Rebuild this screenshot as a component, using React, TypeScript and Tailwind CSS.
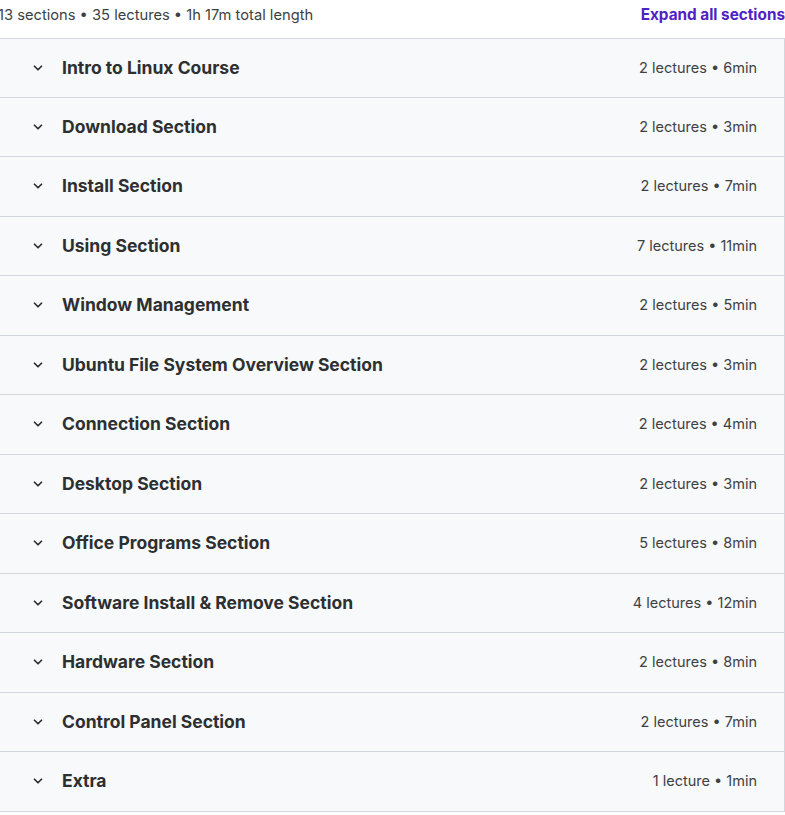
import { ChevronDown } from "lucide-react";

const sections = [
  { title: "Intro to Linux Course", meta: "2 lectures • 6min" },
  { title: "Download Section", meta: "2 lectures • 3min" },
  { title: "Install Section", meta: "2 lectures • 7min" },
  { title: "Using Section", meta: "7 lectures • 11min" },
  { title: "Window Management", meta: "2 lectures • 5min" },
  { title: "Ubuntu File System Overview Section", meta: "2 lectures • 3min" },
  { title: "Connection Section", meta: "2 lectures • 4min" },
  { title: "Desktop Section", meta: "2 lectures • 3min" },
  { title: "Office Programs Section", meta: "5 lectures • 8min" },
  { title: "Software Install & Remove Section", meta: "4 lectures • 12min" },
  { title: "Hardware Section", meta: "2 lectures • 8min" },
  { title: "Control Panel Section", meta: "2 lectures • 7min" },
  { title: "Extra", meta: "1 lecture • 1min" },
];

export default function App() {
  return (
    <div className="min-h-screen bg-white font-['Inter',sans-serif] text-[#2d2f31] overflow-hidden">
      <div className="ml-[-2px] w-[787px]">
        {/* summary line */}
        <div className="flex h-[31px] items-center justify-between">
          <span className="whitespace-nowrap text-[14.7px] text-[#3e4143]">
            13 sections • 35 lectures • 1h 17m total length
          </span>
          <button className="whitespace-nowrap text-[15.3px] font-bold text-[#5022c3]">
            Expand all sections
          </button>
        </div>

        <div className="mt-[7px] border-x border-t border-[#d1d7dc]">
          {sections.map((s, i) => (
            <div
              key={s.title}
              className={
                "flex items-center justify-between border-b border-[#d1d7dc] bg-[#f7f9fa] pl-[32px] pr-[27px] " +
                (i === 0 ? "h-[58.5px]" : "h-[59.5px]")
              }
            >
              <div className="flex items-center gap-[17px]">
                <ChevronDown className="h-[14px] w-[14px] text-[#2d2f31]" strokeWidth={3} />
                <span className="text-[17.5px] font-bold">{s.title}</span>
              </div>
              <span className="text-[14.5px] text-[#3e4143]">{s.meta}</span>
            </div>
          ))}
        </div>
      </div>
    </div>
  );
}
